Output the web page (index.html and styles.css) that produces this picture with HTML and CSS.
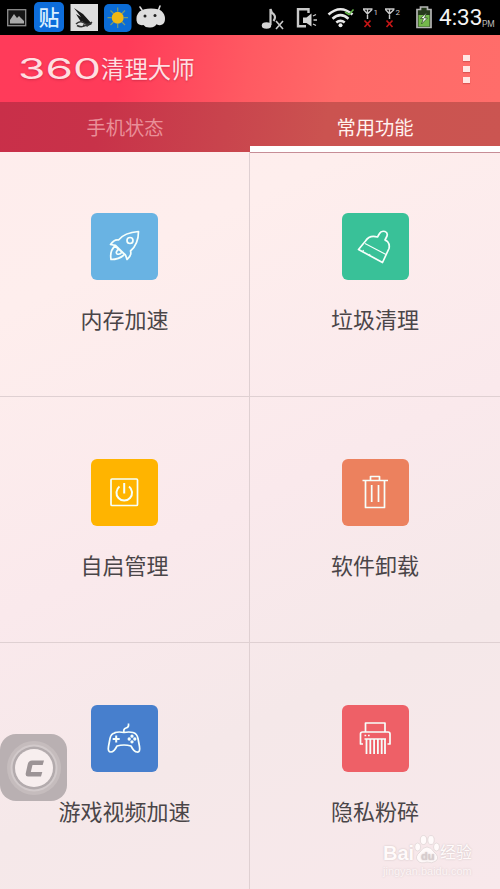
FILE: index.html
```
<!DOCTYPE html>
<html lang="zh-CN">
<head>
<meta charset="utf-8">
<title>360清理大师</title>
<link rel="stylesheet" href="styles.css">
</head>
<body>
<div class="phone">
  <div class="status">
    <div class="status-group">
      <svg width="31" height="35" viewBox="0 0 31 35"><rect x="7.7" y="9.7" width="18" height="16" fill="#161616" stroke="#8e8e8e" stroke-width="1.3"/><path d="M10 23.5V20l4-6 3 4 2-2 5 5v2.500z" fill="#aaa"/></svg>
      <span class="app-badge">贴</span>
      <svg width="102" height="35" viewBox="65 0 102 35">
        <rect x="69.500" y="4" width="27.500" height="27" fill="#dedede"/>
        <path d="M73 8l9 6 9 10-4 2-6-5-6-7 5 3zM75 14l8 7-3 1z" fill="#181818"/>
        <path d="M75 24q4-4 8-1t8-1M76 25.500q5 3 10-1M82 25l5 1" fill="none" stroke="#333" stroke-width="1.500"/>
        <rect x="103" y="4" width="27.500" height="28" rx="5" fill="#0b6cd6"/>
        <path d="M116.700 7.500v4M116.700 24v4M106.500 17.700h4M123 17.700h4M109.500 10.500l3 3M121 22l3 3M124 10.500l-3 3M112.500 22l-3 3" stroke="#7d9b72" stroke-width="1.200"/>
        <circle cx="116.700" cy="17.700" r="6" fill="#efb814"/>
        <path d="M141 10l-2-3M157.500 10l1.500-4" stroke="#dcdcdc" stroke-width="1.600" stroke-linecap="round"/>
        <path d="M138.500 11.500q4-3 11.500-3 8 0 10.500 2.500 3.500 3 3.500 8 0 5-4 6-2 .5-4.500-.8-1.500 3-6 3.300-5 .5-7-2.500-6 1-7-4.500-.5-5.500 3-9z" fill="#dedede"/>
        <circle cx="144" cy="16" r="1.500" fill="#222"/><circle cx="154" cy="15.500" r="1.500" fill="#222"/>
      </svg>
    </div>
    <div class="status-group">
      <svg width="178" height="35" viewBox="258 0 178 35">
        <g fill="none" stroke="#c9c9c9">
          <path d="M270.500 25V9q1 4 3 5 3 3 0 7" stroke-width="2.200"/>
          <path d="M276 21l7 8M283 21l-7 8" stroke-width="1.600"/>
          <path d="M308.500 13V9.200h-10.500v17h8" stroke-width="2.400"/>
          <path d="M313 16l3-1.500M313.500 20h3.500M313 24l3 1.500" stroke-width="1.300"/>
          <path d="M328.500 14.500q12-10.500 24 0M332.500 18.700q8-7 16 0M336.300 22.500q4.200-3.400 8.400 0" stroke="#e8e8e8" stroke-width="2.600"/>
          <path d="M367.500 19V9M363 9h9.500M363.500 9.500l4 4.500 4.500-4.500M389.500 19V9M385 9h9.500M385.500 9.500l4 4.500 4.500-4.500" stroke-width="1.400"/>
          <path d="M364.500 20.500l6 6.500M370.500 20.500l-6 6.500M386.500 20.500l6 6.500M392.500 20.500l-6 6.500" stroke="#c51616" stroke-width="1.700"/>
        </g>
        <ellipse cx="266.500" cy="25.500" rx="4.700" ry="3.300" fill="#d4d4d4"/>
        <path d="M303 17.500h3.500l5-4v13l-5-3.500H303z" fill="#d4d4d4"/>
        <circle cx="340.500" cy="25.300" r="2" fill="#eee"/>
        <path d="M345 12l4 2.500 4.500-5" fill="none" stroke="#67b94b" stroke-width="1.500"/>
        <text class="sim" x="373.500" y="15">1</text><text class="sim" x="395.500" y="15">2</text>
        <path d="M417 9.500h3.500V7h7v2.500h3.500v18h-14z" fill="#263a1c" stroke="#b5b5b5" stroke-width="1.700"/>
        <rect x="418.500" y="15" width="11" height="11.500" fill="#74b84b"/>
        <path d="M426.500 13l-6 5.500h3l-2 5.500 6-6h-3z" fill="#fff" stroke="#28401c" stroke-width=".7"/>
      </svg>
      <span class="clock">4:33</span><span class="pm">PM</span>
    </div>
  </div>
  <header class="header">
    <h1 class="logo"><span class="logo-num">360</span><span class="logo-name">清理大师</span></h1>
    <div class="more"><i></i><i></i><i></i></div>
  </header>
  <nav class="tabs">
    <div class="tab">手机状态</div>
    <div class="tab tab-active">常用功能</div>
  </nav>
  <main class="grid">
    <section class="cell">
      <div class="tile sky"><svg viewBox="0 0 66 66"><path d="M47.500 18.500q-14 1-20 8.500-4-1-8 4.500l5 .8 10 9.700 1.500 4.500q5-4 3.500-8.500 8-7 8-19.500zM24 33l10.500 9M24.500 32.500q-6 5-4.500 14 8 0 13-4.500M28 36q-4 3-2 5 3 1 5-2"/><circle cx="39" cy="27.500" r="3"/></svg></div>
      <div class="label">内存加速</div>
    </section>
    <section class="cell">
      <div class="tile green"><svg viewBox="0 0 66 66"><path d="M16.500 36.500l24 13 6.500-14q1-4-1.500-7l-2.500-1.500 2-4q1-3.500-2-4.500-4-1-5.500 2l-2 3.500q-8-2.500-12 4z"/><path d="M23 30.500l21 11M21.500 37l-1 2M28 41l-1 2" stroke-width="1.100"/></svg></div>
      <div class="label">垃圾清理</div>
    </section>
    <section class="cell">
      <div class="tile yellow"><svg viewBox="0 0 66 66"><rect x="20" y="20" width="26.500" height="26.500" rx="1"/><path d="M28.500 27.500a7.800 7.800 0 1 0 9.500 0M33.200 24v10.500" stroke-width="2"/></svg></div>
      <div class="label">自启管理</div>
    </section>
    <section class="cell">
      <div class="tile orange"><svg viewBox="0 0 66 66"><path d="M20.500 21.500h25.500M23.500 22v26.500h19V22M28.500 21v-3.500h9V21M29.700 26v17M36.500 26v17"/></svg></div>
      <div class="label">软件卸载</div>
    </section>
    <section class="cell">
      <div class="tile blue"><svg viewBox="0 0 66 66"><path d="M33 27.500q-1-3.500 2-4.500 3-.5 2.500-4.500M24 27.500q4-1 9 0 5-1 9 0 4 1 5 6l1.500 8q1 6-2.500 5.500-3 0-6-6-7-2-14 0-3 6-6 6-3.500 0-2.500-5.500l1.500-8q1-5 5-5.500z"/><path d="M25.200 30.500v7M21.700 34h7" stroke-width="2"/><circle cx="41" cy="31.200" r=".8"/><circle cx="41" cy="36.800" r=".8"/><circle cx="38.200" cy="34" r=".8"/><circle cx="43.800" cy="34" r=".8"/></svg></div>
      <div class="label">游戏视频加速</div>
    </section>
    <section class="cell">
      <div class="tile red"><svg viewBox="0 0 66 66"><path d="M23.500 27v-9h19.500v9M21 39h-2.500V29q0-2 2-2H46q2 0 2 2v10h-2.500M22.500 34h21.500"/><path d="M24.500 34v15M28.300 34v15M32.100 34v15M35.900 34v15M39.700 34v15M43 34v15" stroke-width="1.800"/><path d="M22.500 30.500h1.700M26 30.500h1.700"/></svg></div>
      <div class="label">隐私粉碎</div>
    </section>
  </main>
  <svg class="float-ball" viewBox="0 0 67 67">
    <rect width="67" height="67" rx="16" fill="#b9b0b2"/>
    <circle cx="34" cy="34" r="27" fill="#c5bcbd"/><circle cx="34" cy="34" r="23.500" fill="#d2cacb"/><circle cx="34" cy="34" r="21.500" fill="#b3abad"/><circle cx="34" cy="34" r="19" fill="#f7eeee"/>
    <path d="M44 26.500l-1.300 4.500H32.500l-1.700 7h11.500l-1.300 4.500H28q-3 0-2.200-3.500l2-9q.8-3.500 4.200-3.500z" fill="#9c9496"/>
  </svg>
  <div class="watermark">
    <div class="wm-row"><span class="wm-text">Bai</span><svg class="paw" viewBox="0 0 26 30"><g fill="#fffafa" stroke="#ddd2d3" stroke-width=".7"><ellipse cx="3.700" cy="13" rx="3" ry="4"/><ellipse cx="9.500" cy="6" rx="3.200" ry="4.500"/><ellipse cx="17" cy="6" rx="3.200" ry="4.500"/><ellipse cx="22.500" cy="13" rx="3" ry="4"/><path d="M13 13q4 0 7 5 6 5 2 9-4 3-9 1-6 2-9-1-4-4 2-9 3-5 7-5z"/></g><text x="7" y="26">du</text></svg><span class="wm-cn">经验</span></div>
    <div class="wm-url">jingyan.baidu.com</div>
  </div>
</div>
</body>
</html>
```
FILE: styles.css
```
* { box-sizing: border-box; }
body { margin: 0; font-family: "Noto Sans CJK SC", sans-serif; }
svg { display: block; flex: none; }
.phone {
  position: relative;
  width: 500px;
  height: 889px;
  overflow: hidden;
  display: flex;
  flex-direction: column;
  background: linear-gradient(155deg, #feecec 0%, #feeeed 28%, #fae9ec 55%, #f5e8e9 75%, #f8e8eb 100%);
}
.status {
  height: 35px;
  display: flex;
  justify-content: space-between;
  background: #000;
}
.status-group { display: flex; align-items: center; }
.app-badge {
  width: 30px;
  height: 30px;
  margin: 0 2px 1px 3px;
  border-radius: 5px;
  background: #0d6ddb;
  color: #d9efff;
  font-size: 21px;
  font-weight: 500;
  line-height: 29px;
  text-align: center;
}
.sim { font: 8px Roboto, sans-serif; fill: #ccc; }
.clock {
  width: 43px;
  color: #f4f4f4;
  font: 22.500px/37px Roboto, sans-serif;
  white-space: nowrap;
  margin-left: 3px;
}
.pm {
  width: 18px;
  padding-top: 12px;
  color: #b9b9b9;
  font: 8.500px/10px Roboto, sans-serif;
}
.header {
  height: 67px;
  display: flex;
  justify-content: space-between;
  align-items: center;
  padding: 0 30px 0 18px;
  background: linear-gradient(100deg, #ff3b5a 0%, #ff3b59 25%, #ff5a62 50%, #ff6a68 68%, #ff6d6a 100%);
}
.logo {
  margin: 0;
  display: flex;
  align-items: center;
  color: #ffdfe1;
  font-weight: 400;
  text-shadow: 0 1px 2px rgba(150, 20, 50, .4);
}
.logo-num {
  width: 83px;
  font: 400 29px/32px Inter, sans-serif;
  transform: scaleX(1.53);
  transform-origin: left center;
}
.logo-name { margin-top: -2px; font-size: 23.400px; line-height: 30px; }
.more { display: flex; flex-direction: column; gap: 5px; margin-bottom: 0; }
.more i { width: 7px; height: 6px; background: #ffe6e3; box-shadow: 0 1px 1px rgba(170, 50, 50, .4); }
.tabs {
  height: 50px;
  display: flex;
  background: linear-gradient(100deg, #c92f49 0%, #c83249 20%, #c9444d 45%, #cb5350 65%, #cb5551 100%);
}
.tab {
  width: 250px;
  padding-top: 1px;
  color: #e98f98;
  font-size: 19.300px;
  line-height: 49px;
  text-align: center;
}
.tab-active {
  color: #fff2ef;
  border-bottom: 6px solid #fff;
  box-shadow: 0 1px 0 #c78d96;
}
.grid {
  flex: 1;
  display: grid;
  grid-template-columns: 250px 250px;
  grid-template-rows: 245px 246px 246px;
}
.cell {
  display: flex;
  flex-direction: column;
  align-items: center;
  padding: 61px 0 0 0;
  border-bottom: 1px solid #dfd0d2;
}
.cell:nth-child(odd) { border-right: 1px solid #dfd0d2; }
.cell:nth-child(n+3) { padding-top: 61.500px; }
.cell:nth-last-child(-n+2) { border-bottom: 0; }
.tile { width: 67px; height: 67px; border-radius: 6px; flex: none; }
.tile svg {
  width: 66px;
  height: 66px;
  fill: none;
  stroke: #f6fffb;
  stroke-width: 1.700;
  stroke-linejoin: round;
}
.sky { background: #69b3e3; }
.green { background: #39c198; }
.yellow { background: #ffb400; }
.orange { background: #ec815e; }
.blue { background: #477fcd; }
.red { background: #ee6067; }
.label {
  margin-top: 22px;
  color: #4a4548;
  font-size: 22px;
  line-height: 32px;
}
.float-ball { position: absolute; left: 0; top: 734px; width: 67px; height: 67px; }
.watermark { position: absolute; left: 383px; top: 835px; width: 92px; color: #fffafa; text-shadow: 0 0 2px #c8bcbd; }
.wm-row { display: flex; align-items: flex-end; height: 29px; }
.wm-text { width: 31px; font: 700 20px/22px "Liberation Sans", sans-serif; }
.paw { width: 26px; height: 30px; }
.paw text { font: 700 11px "Liberation Sans", sans-serif; fill: #d6cccd; }
.wm-cn { font-size: 16px; line-height: 26px; }
.wm-url { font: 11px/15px "Liberation Sans", sans-serif; opacity: .7; }
```
